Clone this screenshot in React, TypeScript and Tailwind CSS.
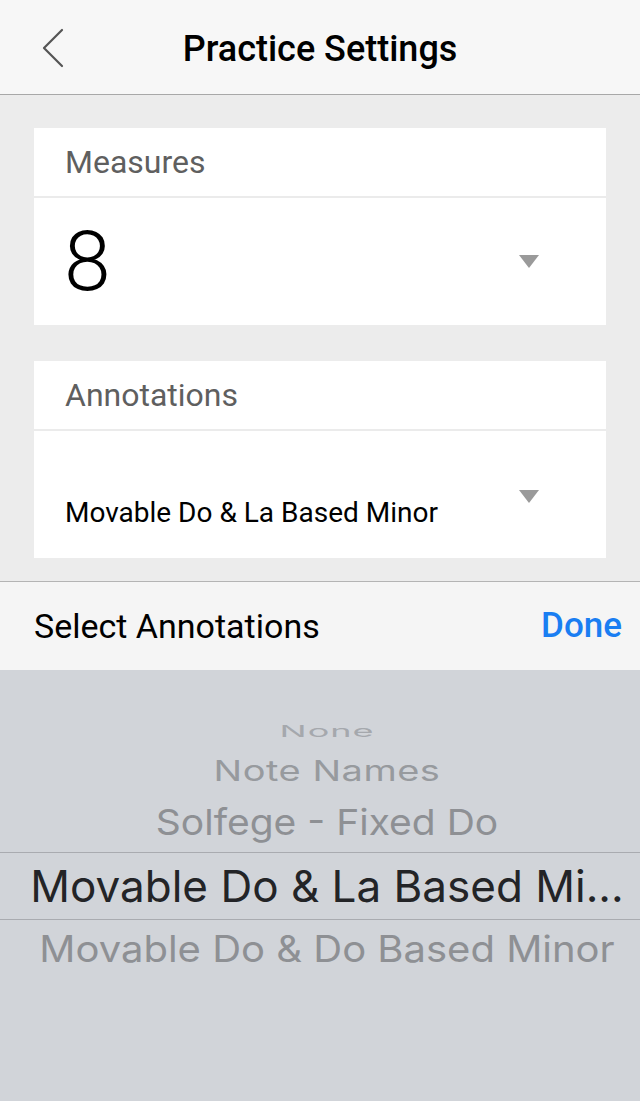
const Caret = () => (
  <svg width="20" height="13" viewBox="0 0 20 13" className="shrink-0">
    <polygon points="0,0 20,0 10,13" fill="#9a9a9a" />
  </svg>
);

const pickerItems = [
  { label: 'None', h: 'h-[38px]', cls: 'text-[36px] text-[#a5a8ad] scale-y-[0.45] tracking-[1px]' },
  { label: 'Note Names', h: 'h-[40px]', cls: 'text-[38px] text-[#979a9e] scale-y-[0.75] tracking-[0.5px]' },
  { label: 'Solfege - Fixed Do', h: 'h-[62px]', cls: 'text-[39px] text-[#8e9094] scale-y-[0.92]' },
];

export default function App() {
  return (
    <div className="w-[640px] h-[1101px] flex flex-col bg-[#ececec] overflow-hidden font-['Roboto',sans-serif]">
      {/* Nav bar */}
      <header className="relative h-[95px] shrink-0 flex items-center justify-center bg-[#f7f7f7] border-b border-[#a8a8a8]">
        <button className="absolute left-[40px] top-[28px]">
          <svg width="26" height="40" viewBox="0 0 26 40" fill="none">
            <path d="M22 2 L4 20 L22 38" stroke="#555" strokeWidth="2.2" strokeLinecap="round" strokeLinejoin="round" />
          </svg>
        </button>
        <h1 className="mt-[4px] text-[36px] font-medium text-black">Practice Settings</h1>
      </header>

      {/* Settings */}
      <main className="px-[34px] pt-[33px] flex flex-col gap-[36px]">
        <section className="bg-white">
          <div className="h-[70px] flex items-center px-[31px] border-b-2 border-[#ebebeb]">
            <span className="text-[32px] text-[#5f5f5f]">Measures</span>
          </div>
          <div className="h-[127px] flex items-center justify-between pl-[30px] pr-[67px]">
            <span className="text-[84px] font-light text-black leading-none">8</span>
            <Caret />
          </div>
        </section>

        <section className="bg-white">
          <div className="h-[70px] flex items-center px-[31px] border-b-2 border-[#ebebeb]">
            <span className="text-[32px] text-[#5f5f5f]">Annotations</span>
          </div>
          <div className="relative h-[127px] flex items-end pb-[24px] pl-[31px]">
            <span className="text-[28px] text-black">Movable Do &amp; La Based Minor</span>
            <div className="absolute right-[67px] top-[59px]">
              <Caret />
            </div>
          </div>
        </section>
      </main>

      {/* Toolbar */}
      <div className="mt-[23px] h-[89px] shrink-0 flex items-center justify-between px-[34px] pr-[18px] bg-[#f5f5f5] border-t border-[#b4b4b4]">
        <span className="text-[34px] text-black">Select Annotations</span>
        <span className="text-[35px] font-medium text-[#1a7ef2]">Done</span>
      </div>

      {/* Picker */}
      <div className="flex-1 bg-[#d1d4d9] pt-[42px] flex flex-col font-['Inter',sans-serif]">
        {pickerItems.map((item) => (
          <div key={item.label} className={`${item.h} flex items-center justify-center pl-[14px]`}>
            <span className={`${item.cls} leading-none whitespace-nowrap`}>{item.label}</span>
          </div>
        ))}
        <div className="h-[68px] flex items-center justify-center pl-[14px] border-y border-[#a9abb0]">
          <span className="text-[44px] text-[#232427] leading-none whitespace-nowrap">Movable Do &amp; La Based Mi...</span>
        </div>
        <div className="h-[58px] flex items-center justify-center pl-[14px]">
          <span className="text-[40px] text-[#8e9094] leading-none whitespace-nowrap scale-y-[0.92]">
            Movable Do &amp; Do Based Minor
          </span>
        </div>
      </div>
    </div>
  );
}
